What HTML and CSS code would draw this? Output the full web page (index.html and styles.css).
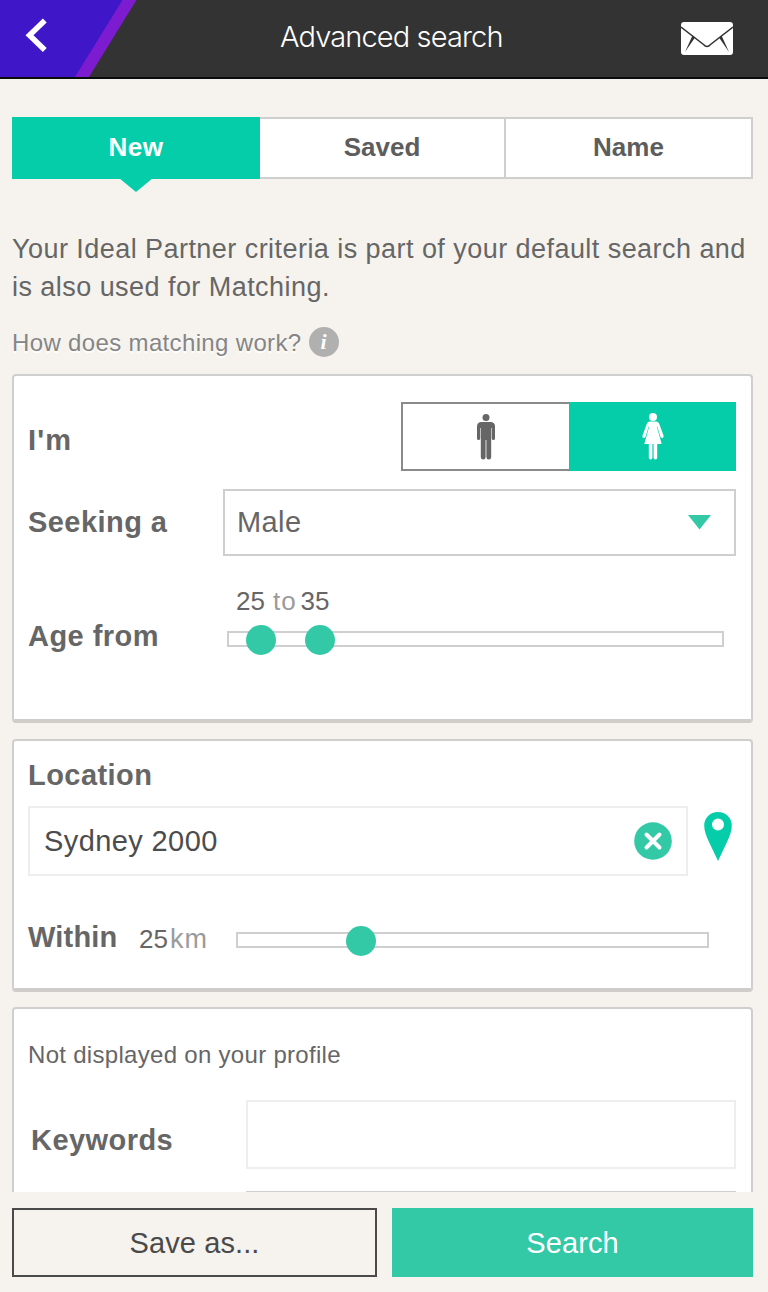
FILE: index.html
```html
<!DOCTYPE html>
<html lang="en">
<head>
    <meta charset="UTF-8">
    <meta name="viewport" content="width=device-width, initial-scale=1.0">
    <title>Advanced search</title>
    <link rel="stylesheet" href="styles.css">
</head>
<body>
    <div class="app">
        <header class="header">
            <a class="back" aria-label="Back">
                <svg width="137" height="77" viewBox="0 0 137 77">
                    <path d="M0 0H136.500L89 77H0z" fill="#7c1bd0"/>
                    <path d="M0 0H122.500L75 77H0z" fill="#4017c8"/>
                    <path d="M44.800 20.500L29.500 35.200L44.800 50" fill="none" stroke="#fff" stroke-width="5.500"/>
                </svg>
            </a>
            <h1 class="title">Advanced search</h1>
            <a class="mail" aria-label="Messages">
                <svg width="52" height="33" viewBox="0 0 52 33">
                    <rect width="52" height="33" rx="3" fill="#fff"/>
                    <path d="M0 5L22.500 22.500Q26 26.500 29.500 22.500L52 5" fill="none" stroke="#333" stroke-width="1.500"/>
                    <path d="M11.500 13.500L14 15.500L4 30zM40.500 13.500L38 15.500L48 30z" fill="#333"/>
                </svg>
            </a>
        </header>

        <main class="content">
            <nav class="tabs">
                <a class="tab active">New</a>
                <a class="tab">Saved</a>
                <a class="tab">Name</a>
            </nav>

            <p class="intro">Your Ideal Partner criteria is part of your default search and<br>is also used for Matching.</p>
            <div class="help">
                <span class="help-text">How does matching work?</span>
                <span class="info">i</span>
            </div>

            <section class="panel panel-person">
                <div class="row row-gender">
                    <span class="label">I'm</span>
                    <div class="gender">
                        <button class="gender-option" aria-label="Male">
                            <svg width="18" height="46" viewBox="0 0 18 46">
                                <circle cx="9" cy="3.500" r="3.500"/>
                                <path d="M4.500 8H13.500Q18 8 18 12.500V24.500Q18 26 16.500 26Q14.800 26 14.800 24.500V14H14.200V43Q14.200 45.500 11.800 45.500Q9.400 45.500 9.400 43V26H8.600V43Q8.600 45.500 6.200 45.500Q3.800 45.500 3.800 43V14H3.200V24.500Q3.200 26 1.500 26Q0 26 0 24.500V12.500Q0 8 4.500 8z"/>
                            </svg>
                        </button>
                        <button class="gender-option selected" aria-label="Female">
                            <svg width="22" height="47" viewBox="0 0 22 47">
                                <circle cx="11" cy="4" r="4"/>
                                <path d="M8 8.500H14Q16.500 8.500 17.500 11.500L21.500 22.500Q22 24.500 20.500 25Q19 25.300 18.500 24L15.300 13.500H14.800L19.700 31H15.200V44.500Q15.200 46.500 13.400 46.500Q11.600 46.500 11.600 44.500V31H10.400V44.500Q10.400 46.500 8.600 46.500Q6.800 46.500 6.800 44.500V31H2.300L7.200 13.500H6.700L3.500 24Q3 25.300 1.500 25Q0 24.500 .5 22.500L4.500 11.500Q5.500 8.500 8 8.500z"/>
                            </svg>
                        </button>
                    </div>
                </div>
                <div class="row row-seeking">
                    <span class="label">Seeking a</span>
                    <div class="select">
                        <span class="select-value">Male</span>
                        <svg width="23" height="15" viewBox="0 0 23 15"><path d="M0 0H23L11.500 14.500z" fill="#33c9a7"/></svg>
                    </div>
                </div>
                <div class="row row-age">
                    <span class="label label-age">Age from</span>
                    <div class="age">
                        <div class="age-value"><span>25</span><span class="unit to">to</span><span>35</span></div>
                        <div class="track">
                            <span class="handle" style="left: 17px"></span>
                            <span class="handle" style="left: 76px"></span>
                        </div>
                    </div>
                </div>
            </section>

            <section class="panel panel-location">
                <span class="label label-location">Location</span>
                <div class="location">
                    <div class="location-field">
                        <span class="location-value">Sydney 2000</span>
                        <svg width="38" height="38" viewBox="0 0 38 38">
                            <circle cx="19" cy="19" r="18.800" fill="#33c9a7"/>
                            <path d="M12.500 12.500L25.500 25.500M25.500 12.500L12.500 25.500" stroke="#fff" stroke-width="4" stroke-linecap="round"/>
                        </svg>
                    </div>
                    <svg class="pin" width="28" height="49" viewBox="0 0 28 49">
                        <path fill="#05cdaa" fill-rule="evenodd" d="M14 0C22 0 27.800 6 27.800 13.500C27.800 19 25.500 24.500 23 30L14 49L5 30C2.500 24.500 .2 19 .2 13.500C.2 6 6 0 14 0zM14 6.500A6 6 0 1 0 14 18.500A6 6 0 1 0 14 6.500z"/>
                    </svg>
                </div>
                <div class="row row-within">
                    <span class="label label-within">Within</span>
                    <div class="distance">25<span class="unit">km</span></div>
                    <div class="track track-within">
                        <span class="handle" style="left: 108px"></span>
                    </div>
                </div>
            </section>

            <section class="panel panel-keywords">
                <p class="note">Not displayed on your profile</p>
                <div class="row row-keywords">
                    <span class="label label-keywords">Keywords</span>
                    <div class="fields">
                        <div class="keyword-field"></div>
                        <div class="next-field"></div>
                    </div>
                </div>
            </section>
        </main>

        <footer class="footer">
            <button class="btn btn-save"><span>Save as...</span></button>
            <button class="btn btn-search"><span>Search</span></button>
        </footer>
    </div>
</body>
</html>
```
FILE: styles.css
```css
:root {
    --green: #05cdaa;
    --soft-green: #33c9a7;
    --bg: #f6f3ee;
    --border: #cfcfcf;
    --text: #666;
}

* {
    box-sizing: border-box;
}

body {
    margin: 0;
    background: var(--bg);
    color: var(--text);
    font-family: "Liberation Sans", Arial, sans-serif;
}

button {
    font-family: inherit;
    padding: 0;
    border-radius: 0;
}

svg {
    display: block;
    flex: none;
}

.app {
    height: 1292px;
    display: flex;
    flex-direction: column;
    overflow: hidden;
}

.header {
    height: 79px;
    flex: none;
    display: flex;
    align-items: flex-start;
    background: #333;
    border-bottom: 2px solid #080c0d;
}

.title {
    margin: 19px 0 0 143px;
    width: 224px;
    color: #fff;
    font-family: Inter, sans-serif;
    font-size: 29px;
    font-weight: 300;
    line-height: 36px;
    letter-spacing: -0.87px;
    white-space: nowrap;
}

.mail {
    margin: 22px 35px 0 auto;
}

.content {
    flex: 1;
    min-height: 0;
    overflow: hidden;
    padding: 38px 15px 0 12px;
}

.tabs {
    display: grid;
    grid-template-columns: 248px 246px 247px;
    height: 62px;
}

.tab {
    border: 2px solid var(--border);
    border-left: 0;
    background: #fff;
    color: #5d5d5d;
    font-size: 26px;
    font-weight: bold;
    line-height: 57px;
    text-align: center;
}

.tab.active {
    position: relative;
    border: 0;
    background: var(--green);
    color: #fff;
    line-height: 61px;
    letter-spacing: 0.5px;
}

.tab.active::after {
    content: "";
    position: absolute;
    left: 107px;
    top: 61px;
    border: 17px solid transparent;
    border-top: 14px solid var(--green);
    border-bottom: 0;
}

.intro {
    margin: 52px 0 0;
    font-size: 27px;
    line-height: 37.500px;
    letter-spacing: 0.45px;
    white-space: nowrap;
}

.help {
    display: flex;
    align-items: center;
    gap: 7px;
    height: 30px;
    margin: 21px 0 17px;
    color: #858585;
    font-size: 24px;
    line-height: 32px;
    text-shadow: 0 2px 1px #fff;
}

.help-text {
    padding-top: 2px;
    letter-spacing: 0.35px;
}

.info {
    width: 30px;
    height: 30px;
    border-radius: 50%;
    background: #b0b0b0;
    color: #fff;
    font: italic bold 22px/29px "Liberation Serif", serif;
    text-align: center;
    text-shadow: none;
}

.panel {
    border: 2px solid var(--border);
    border-bottom: 4px solid #cecdc9;
    border-radius: 4px;
    background: #fff;
    margin-bottom: 16px;
}

.row {
    display: flex;
}

.label {
    font-size: 29px;
    font-weight: bold;
    line-height: 36px;
    letter-spacing: 0.45px;
    white-space: nowrap;
}

.panel-person {
    height: 349px;
    padding: 26px 14px 0;
}

.row-gender {
    height: 69px;
    align-items: center;
    justify-content: space-between;
}

.row-gender .label {
    margin-top: 7px;
    letter-spacing: 1.2px;
}

.gender {
    display: grid;
    grid-template-columns: 168px 167px;
    height: 69px;
    margin-right: 1px;
}

.gender-option {
    display: flex;
    align-items: center;
    justify-content: center;
    border: 2px solid #8a8a8a;
    border-right: 0;
    background: #fff;
    fill: #666;
}

.gender-option.selected {
    border: 0;
    background: var(--green);
    fill: #fff;
}

.row-seeking {
    height: 67px;
    margin-top: 18px;
    align-items: center;
}

.row-seeking .label {
    width: 195px;
    margin-top: -2px;
}

.select {
    display: flex;
    align-items: center;
    justify-content: space-between;
    width: 513px;
    height: 67px;
    padding: 0 23px 0 12px;
    border: 2px solid var(--border);
    font-size: 29px;
    letter-spacing: 0.4px;
}

.row-age {
    margin-top: 29px;
}

.label-age {
    width: 199px;
    margin-top: 33px;
}

.age-value {
    display: flex;
    height: 31px;
    margin-left: 9px;
    font-size: 26px;
    line-height: 32px;
}

.age-value .to {
    margin: 0 4px 0 8px;
}

.unit {
    color: #9b9b9b;
    font-size: 26px;
    letter-spacing: 1px;
}

.track {
    position: relative;
    width: 497px;
    height: 16px;
    margin-top: 15px;
    border: 2px solid var(--border);
}

.handle {
    position: absolute;
    top: -8px;
    width: 30px;
    height: 30px;
    border-radius: 50%;
    background: var(--soft-green);
}

.panel-location {
    height: 253px;
    margin-bottom: 15px;
    padding: 16px 14px 0;
}

.label-location {
    display: block;
}

.location {
    display: flex;
    align-items: flex-start;
    margin-top: 13px;
}

.location-field {
    display: flex;
    align-items: center;
    justify-content: space-between;
    width: 660px;
    height: 70px;
    padding: 0 14px;
    border: 2px solid #eee;
    color: #4c4c4c;
    font-size: 29px;
    letter-spacing: 0.4px;
}

.pin {
    margin: 6px 0 0 16px;
}

.row-within {
    margin-top: 43px;
}

.label-within {
    width: 111px;
    letter-spacing: 0.2px;
}

.distance {
    width: 97px;
    font-size: 26px;
    line-height: 40px;
    white-space: nowrap;
}

.distance .unit {
    margin-left: 2px;
    font-size: 27px;
}

.track-within {
    width: 473px;
    margin-top: 13px;
}

.panel-keywords {
    height: 300px;
    margin-bottom: 0;
    padding: 29px 14px 0;
}

.note {
    margin: 0;
    font-size: 24px;
    line-height: 34px;
    letter-spacing: 0.3px;
}

.row-keywords {
    margin-top: 28px;
}

.label-keywords {
    width: 215px;
    margin: 22px 0 0 3px;
}

.fields {
    width: 490px;
}

.keyword-field {
    height: 69px;
    border: 2px solid #eee;
}

.next-field {
    height: 69px;
    margin-top: 22px;
    border: 2px solid var(--border);
}

.footer {
    flex: none;
    display: grid;
    grid-template-columns: 365px 361px;
    column-gap: 15px;
    height: 100px;
    padding: 16px 15px 15px 12px;
    background: var(--bg);
}

.btn {
    border: 0;
    font-size: 29px;
    line-height: 36px;
    letter-spacing: 0.1px;
}

.btn-save {
    border: 2px solid #4a4a4a;
    background: var(--bg);
    color: #4a4a4a;
}

.btn-search {
    background: var(--soft-green);
    color: #fff;
}
```
